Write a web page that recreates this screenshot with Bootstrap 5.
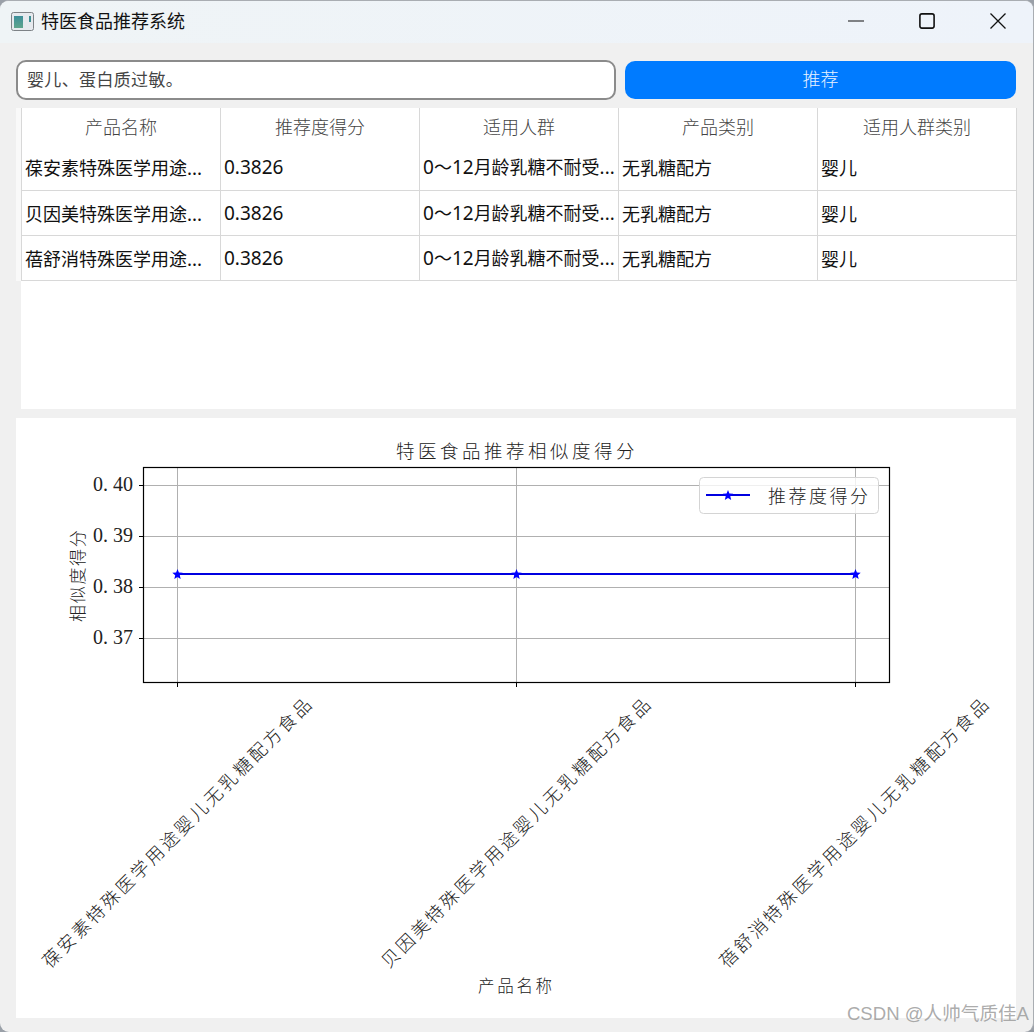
<!DOCTYPE html>
<html lang="zh">
<head>
<meta charset="utf-8">
<title>特医食品推荐系统</title>
<link href="https://cdn.jsdelivr.net/npm/bootstrap@5.3.0/dist/css/bootstrap.min.css" rel="stylesheet">
<style>
html,body{height:100%;margin:0;background:#9aa0a8;overflow:hidden}
body{font-family:"Noto Sans CJK SC","Noto Sans",sans-serif}
.app-window{position:relative;width:1034px;height:1032px;background:#f0f0f0;border-radius:9px;border:1px solid #a9adb2;border-bottom:0;border-left:0;overflow:hidden}
.title-bar{height:42px;background:linear-gradient(90deg,#eff4f6,#eef3fa);padding-left:11px;padding-bottom:2px;gap:7px}
.title-text{font-size:18px;line-height:1;color:#111;margin-top:-2px}
.win-ctrl{width:71px;height:40px}
.work-area{padding:17px 17px 0 16px;gap:9px}
.query-row{gap:9px}
.query-input{width:600px;height:40px;border:2px solid #8b8b8b;border-radius:10px;background:#fff;font-size:17px;letter-spacing:.35px;color:#444;padding:0 9px 3px;box-shadow:none}
.query-btn{width:391px;height:38px;margin-top:1px;background:#007bff;border:0;border-radius:10px;color:#e8f2ff;font-size:18px;padding:0 0 3px;font-weight:300}
.query-btn:hover{background:#007bff;color:#e8f2ff}
.table-panel{height:301px;margin-top:-1px}
.table-strip{background:#f9f9f9;padding-left:5px;height:173px}
.table-fill{flex:1;background:#fff;margin-left:5px}
.data-table{table-layout:fixed;width:995px;margin:0;background:#fff;border-collapse:collapse}
.data-table col{width:199px}
.data-table th,.data-table td{border:1px solid #d8d8d8;background:#fff;box-shadow:none;padding:0 3px;color:#111;font-size:18px;line-height:1;white-space:nowrap;overflow:hidden}
.data-table th{height:37px;border-bottom:0;border-top:0;font-weight:300;color:#444;text-align:center;vertical-align:middle;padding-bottom:2px}
.data-table td{height:45px;border-top:0;vertical-align:middle}
.num-text{font-family:"Noto Sans",sans-serif;font-size:19px}
.chart-panel{width:1000px;height:600px;background:#fff}
.chart-panel svg{display:block}
.chart-cjk{font-family:"Noto Sans CJK SC",sans-serif;font-weight:300;fill:#222}
.chart-num{font-family:"Liberation Serif",serif;fill:#222;font-size:20px}
.watermark{position:absolute;right:4px;bottom:8px;font-size:18.600px;line-height:1;color:rgba(150,150,150,.8);font-family:"Liberation Sans","Noto Sans CJK SC",sans-serif;white-space:nowrap}
</style>
</head>
<body>
<div class="app-window d-flex flex-column">
  <div class="title-bar d-flex align-items-center">
    <svg width="23" height="19" viewBox="0 0 23 19" aria-hidden="true">
      <defs><linearGradient id="ic" x1="0" y1="0" x2="0" y2="1"><stop offset="0" stop-color="#3d8f9a"/><stop offset="1" stop-color="#5fa58c"/></linearGradient></defs>
      <rect x=".5" y=".5" width="22" height="18" rx="2" fill="#e6eaee" stroke="#7d8286"/>
      <rect x="3" y="4" width="9" height="12" fill="url(#ic)"/>
      <rect x="18" y="4" width="2" height="6" fill="#3f8f94"/>
    </svg>
    <span class="title-text">特医食品推荐系统</span>
    <div class="ms-auto d-flex">
      <div class="win-ctrl d-flex align-items-center justify-content-center"><svg width="16" height="16" viewBox="0 0 16 16" aria-hidden="true"><path d="M0 8h16" stroke="#111" stroke-width="1.2"/></svg></div>
      <div class="win-ctrl d-flex align-items-center justify-content-center"><svg width="16" height="16" viewBox="0 0 16 16" aria-hidden="true"><rect x=".9" y=".9" width="14.2" height="14.2" rx="2" fill="none" stroke="#111" stroke-width="1.6"/></svg></div>
      <div class="win-ctrl d-flex align-items-center justify-content-center"><svg width="16" height="16" viewBox="0 0 16 16" aria-hidden="true"><path d="M.5.5l15 15M15.500.5l-15 15" stroke="#111" stroke-width="1.3"/></svg></div>
    </div>
  </div>
  <div class="work-area d-flex flex-column">
    <div class="d-flex query-row">
      <input class="form-control query-input" type="text" value="婴儿、蛋白质过敏。">
      <button class="btn query-btn" type="button">推荐</button>
    </div>
    <div class="table-panel d-flex flex-column">
      <div class="table-strip">
        <table class="table data-table">
          <colgroup><col><col><col><col><col></colgroup>
          <thead><tr><th>产品名称</th><th>推荐度得分</th><th>适用人群</th><th>产品类别</th><th>适用人群类别</th></tr></thead>
          <tbody>
            <tr><td>葆安素特殊医学用途...</td><td><span class="num-text">0.3826</span></td><td><span class="num-text">0</span>～<span class="num-text">12</span>月龄乳糖不耐受...</td><td>无乳糖配方</td><td>婴儿</td></tr>
            <tr><td>贝因美特殊医学用途...</td><td><span class="num-text">0.3826</span></td><td><span class="num-text">0</span>～<span class="num-text">12</span>月龄乳糖不耐受...</td><td>无乳糖配方</td><td>婴儿</td></tr>
            <tr><td>蓓舒消特殊医学用途...</td><td><span class="num-text">0.3826</span></td><td><span class="num-text">0</span>～<span class="num-text">12</span>月龄乳糖不耐受...</td><td>无乳糖配方</td><td>婴儿</td></tr>
          </tbody>
        </table>
      </div>
      <div class="table-fill"></div>
    </div>
    <div class="chart-panel">
      <svg width="1000" height="600" viewBox="16 418 1000 600" role="img" aria-label="特医食品推荐相似度得分">
        <defs><path id="star" d="M0-5.500l1.400 3.600 3.800.2-2.900 2.400.9 3.700-3.200-2-3.200 2 .9-3.700-2.900-2.400 3.800-.2z"/></defs>
        <g stroke="#b0b0b0" stroke-width="1" fill="none">
          <path d="M143 485.500H890M143 536.500H890M143 587.500H890M143 638.500H890"/>
          <path d="M177.500 467V682M516.500 467V682M855.500 467V682"/>
        </g>
        <path d="M177.500 574H855.500" stroke="#0000e0" stroke-width="2"/>
        <g fill="#0000ff">
          <use href="#star" x="177.500" y="574.500"/>
          <use href="#star" x="516.500" y="574.500"/>
          <use href="#star" x="855.500" y="574.500"/>
        </g>
        <rect x="143.500" y="467.500" width="746" height="215" fill="none" stroke="#000" stroke-width="1.200"/>
        <path d="M139 485.500h4M139 536.500h4M139 587.500h4M139 638.500h4M177.500 682v5M516.500 682v5M855.500 682v5" stroke="#000" stroke-width="1"/>
        <text class="chart-num" x="93" y="491">0. 40</text>
        <text class="chart-num" x="93" y="542">0. 39</text>
        <text class="chart-num" x="93" y="593">0. 38</text>
        <text class="chart-num" x="93" y="644">0. 37</text>
        <text class="chart-cjk" x="396" y="458" font-size="18.500" letter-spacing="3.500">特医食品推荐相似度得分</text>
        <text class="chart-cjk" transform="translate(84 622) rotate(-90)" font-size="17" letter-spacing="1.700">相似度得分</text>
        <text class="chart-cjk" x="478" y="992" font-size="16.500" letter-spacing="2.700">产品名称</text>
        <rect x="699.500" y="477.500" width="179" height="36" rx="4" fill="#fff" fill-opacity=".8" stroke="#d4d4d4"/>
        <path d="M706 495h44" stroke="#0000e0" stroke-width="2"/>
        <use href="#star" x="728" y="495.500" fill="#0000ff"/>
        <text class="chart-cjk" x="768" y="503" font-size="18" letter-spacing="2.500">推荐度得分</text>
        <text class="chart-cjk" transform="translate(50 969) rotate(-45)" font-size="18" letter-spacing="2.800">葆安素特殊医学用途婴儿无乳糖配方食品</text>
        <text class="chart-cjk" transform="translate(389 969) rotate(-45)" font-size="18" letter-spacing="2.800">贝因美特殊医学用途婴儿无乳糖配方食品</text>
        <text class="chart-cjk" transform="translate(727 969) rotate(-45)" font-size="18" letter-spacing="2.800">蓓舒消特殊医学用途婴儿无乳糖配方食品</text>
      </svg>
    </div>
  </div>
  <div class="watermark">CSDN @人帅气质佳A</div>
</div>
</body>
</html>
